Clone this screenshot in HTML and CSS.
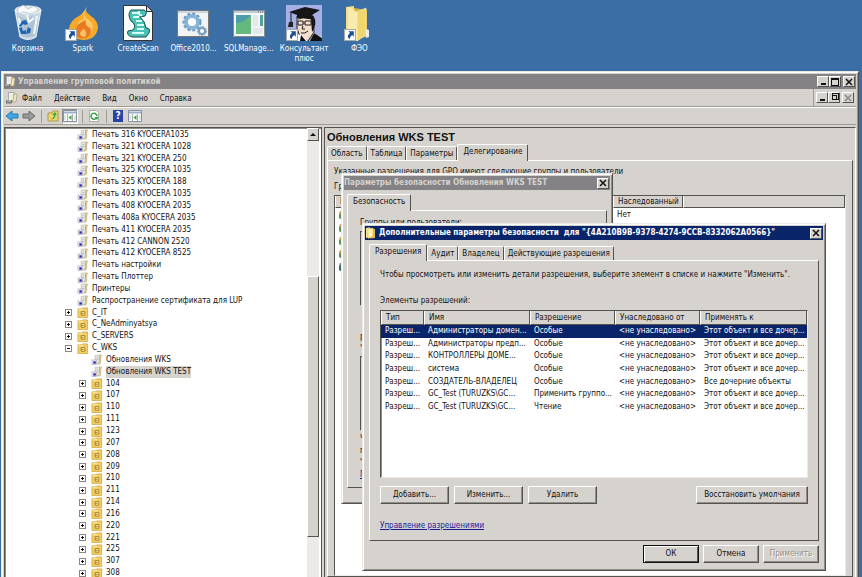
FILE: index.html
```
<!DOCTYPE html>
<html lang="ru">
<head>
    <meta charset="UTF-8">
    <meta name="viewport" content="width=device-width, initial-scale=1.0">
    <title>Управление групповой политикой</title>
    <link rel="stylesheet" href="styles.css">
</head>
<body>
    <!-- shared icons -->
    <svg class="sprite" aria-hidden="true">
        <symbol id="gpo" viewBox="0 0 12 12">
            <path d="M4 1.5L9.500 1L9 10.500L4 11z" fill="#e9e6dc" stroke="#aaa69a" stroke-width=".6"/>
            <path d="M9 1.500q1.500-1.500 2.200 0q0 1.200-1.200 1.200V10q-1.500 1.500-3 .8L8.500 9z" fill="#efe4ae" stroke="#9a8d55" stroke-width=".5"/>
            <path d="M5.500 4h2M5.500 6h2" stroke="#aab" stroke-width=".7"/>
            <rect x=".5" y="6.500" width="5" height="5" fill="#eef" stroke="#99a" stroke-width=".6"/>
            <path d="M2 10.500V8h2.700v2.500z" fill="#2424a8"/>
        </symbol>
        <symbol id="ou" viewBox="0 0 12 12">
            <path d="M.5 2h4l1-1h5.500v10.500H.5z" fill="#f3cf63" stroke="#c8962c" stroke-width=".7"/>
            <path d="M1 2.500h5v1H1z" fill="#fdf0b5"/>
            <path d="M4 5h4v4H4zM4 7h2.500" fill="#fbe69a" stroke="#9c741c" stroke-width=".9"/>
        </symbol>
        <symbol id="folder" viewBox="0 0 12 12">
            <path d="M1 1l4-.8v10L1 11z" fill="#f6e38c"/>
            <path d="M5 1l5 1v9l-5 .5z" fill="#e5bd45"/>
            <path d="M3 2l5-1v8.500L3 11.500z" fill="#fff3ae" stroke="#cfa838" stroke-width=".4"/>
        </symbol>
        <symbol id="shortcut" viewBox="0 0 11 11">
            <path d="M.5.5h10v10H.5z" fill="#fff" stroke="#aaa"/>
            <path d="M4 2h5v5L7.500 5.500Q5 7 5.500 9.500Q1.500 7.500 5.500 3.500z" fill="#1b4f96"/>
        </symbol>
        <symbol id="console" viewBox="0 0 12 12">
            <path d="M2.500.5h5.500v8H2.500z" fill="#f4f2e6" stroke="#aaa"/>
            <path d="M8 2q3-1 3 1l-1 7H6l1-2z" fill="#eee5bb" stroke="#988f69" stroke-width=".6"/>
            <path d="M0 8h6v3.500H0z" fill="#777"/><path d="M1 9h4M4 3h2M4 5h2" stroke="#ddd"/>
        </symbol>
        <symbol id="cross" viewBox="0 0 8 8">
            <path d="M1 1l6 6M7 1L1 7" fill="none" stroke="currentColor" stroke-width="1.500"/>
        </symbol>
        <symbol id="pane" viewBox="0 0 14 12">
            <path d="M.5.5h13v11H.5z" fill="#fff" stroke="#8791a4"/>
            <path d="M1 2.500h12" stroke="#9cafca" stroke-width="2"/><path d="M4.500 4v7M9.500 4v7" stroke="#a5b0a5"/>
            <path d="M2 5v5M12 5v5" stroke="#bcc"/><path d="M8.500 5v5L5.500 7.500z" fill="#36a542"/>
        </symbol>
    </svg>

    <main class="desktop">
        <nav class="shortcuts">
            <a href="#">
                <svg viewBox="0 0 36 38"><path d="M5 6l5 27q8 5 16 0l5-27z" fill="#c4d4e0" stroke="#eef4f8"/><ellipse cx="18" cy="6" rx="13" ry="4" fill="#dde6ed" stroke="#f7fafc"/><path d="M7 5l6-4 5 4 6-3 5 4-8 4-7-2-5 2z" fill="#f7f9fb" stroke="#9db1c1" stroke-width=".6"/><path d="M9 12l6 3 6-3 7 4-2 15q-8 4-15 0z" fill="#aec2d1"/><path d="M9 14l4 16M27 12l-3 18M17 11l2 7 5-4" stroke="#f4f8fb" stroke-width="2" fill="none"/><path d="M12 17l4-1 2 4-3 1-2-1-2 3-2-1zM9 24l3-1 1 4 3-1v4h-5zM18 23l3 2-1 4-4 1 1-4z" fill="#2264b4"/></svg>
                <span>Корзина</span>
            </a>
            <a href="#">
                <svg viewBox="0 0 36 38"><path d="M22 1q-4 6 4 11 7 5 7 12-2 12-15 12Q4 35 4 25q1-9 10-13 6-4 8-11z" fill="#f7a928"/><path d="M23 2q-7 9 0 13 7 5 4 13-4 6-10 5-8-3-6-9 2-8 8-9-3-6 4-13z" fill="#fcc768"/><path d="M21 16q-2 5 4 8 3 6-4 10-10 2-11-6 1-9 11-12z" fill="#ea7a20"/><path d="M19 25q4 4 1 8-5 0-5-4 1-3 4-4z" fill="#fbc06a"/><use href="#shortcut" x="0" y="25" width="12" height="12"/></svg>
                <span>Spark</span>
            </a>
            <a href="#">
                <svg viewBox="0 0 36 38"><path d="M3.500 1.500h23l6 6v29h-29z" fill="#fff" stroke="#333"/><path d="M26.500 1.500v6h6z" fill="#ddd" stroke="#333"/><path d="M11 6h13q4 2 1 6l-5 1q5 4 6 11 5 0 3 5l-3 4H12q-6-2-4-6l5-1q4-5-2-9-4-7 0-11z" fill="#48c2b4" stroke="#174c4b"/><path d="M12 9h8M13 13h6M16 17h6M17 21h7M17 25h7M12 29h12M19 7q-1 5 3 4" stroke="#d7fff8" stroke-width="2" fill="none"/></svg>
                <span>CreateScan</span>
            </a>
            <a href="#">
                <svg viewBox="0 0 36 38"><path d="M2.500 6.500h31v26h-31z" fill="#f2f3f4" stroke="#777"/><path d="M3 8h30" stroke="#cbd6df" stroke-width="2"/><circle cx="17" cy="18" r="6" fill="#fff" stroke="#88b4d7" stroke-width="4"/><circle cx="17" cy="18" r="8.500" fill="none" stroke="#6b9ac2" stroke-width="2" stroke-dasharray="3 2"/><circle cx="27" cy="27" r="3" fill="#fff" stroke="#779fc0" stroke-width="2"/><circle cx="27" cy="27" r="4.500" fill="none" stroke="#779fc0" stroke-dasharray="2 1"/></svg>
                <span>Office2010...</span>
            </a>
            <a href="#">
                <svg viewBox="0 0 36 38"><path d="M2.500 6.500h31v26h-31z" fill="#f5f6f6" stroke="#858c91"/><path d="M3 8h30" stroke="#c1cdd5" stroke-width="2"/><path d="M5 11h15v19H5z" fill="#4b9daa"/><path d="M5 30V19q9-1 15-8v19z" fill="#65b87e"/><path d="M22 11h5v11h-5zM22 24h10v6H22z" fill="#e3e8ea"/><path d="M29 11h3v11h-3z" fill="#50a5a1"/><path d="M27 8h5" stroke="#567" stroke-dasharray="1 1"/></svg>
                <span>SQLManage...</span>
            </a>
            <a href="#">
                <svg viewBox="0 0 36 38"><path d="M0 1h36v36H0z" fill="#a6b0e4"/><path d="M11 12h16l1 16-6 9-8-4-3-9z" fill="#f4dfcd" stroke="#222"/><path d="M25 10q7 5 3 15l-2 3-1-12z" fill="#181818"/><path d="M12 17h5v4h-5zM19 17h6v4h-6zM17 19h2M17 22l-1 3h3M15 29q4 1 7-2M12 15l4-1M20 14l5 1" fill="none" stroke="#222"/><path d="M10 30l5 1 7 6h7l-2-8 9 4v4H8z" fill="#fff"/><path d="M24 37l4-8 8 5v3zM15 31l5 6h-6z" fill="#111"/><path d="M3 8l16-5 15 3-8 5-1 4-14-1v-3z" fill="#161616"/><path d="M5 9v11" stroke="#161616"/><path d="M3 18h4v5H2z" fill="#222"/><use href="#shortcut" y="25" width="12" height="12"/></svg>
                <span>Консультант плюс</span>
            </a>
            <a href="#">
                <svg viewBox="0 0 36 38"><path d="M5 3l8-1v31l-8-2z" fill="#f4df85"/><path d="M13 4l13 2v27l-13 1z" fill="#d6b546"/><path d="M7 3l9 5v29l-9-5z" fill="#f9ebb0"/><path d="M16 8l9-4v27l-9 6z" fill="#efd66e" stroke="#fff0af" stroke-width=".7"/><path d="M25 25l3 1v7l-3 1z" fill="#e8ecef"/><use href="#shortcut" x="3" y="25" width="12" height="12"/></svg>
                <span>ФЭО</span>
            </a>
        </nav>

        <!-- group policy console -->
        <section class="window console">
            <header class="titlebar">
                <svg class="icon"><use href="#console"/></svg>
                <h1>Управление групповой политикой</h1>
                <div class="controls">
                    <button class="control" aria-label="Свернуть"><i class="min"></i></button>
                    <button class="control" aria-label="Развернуть"><i class="max"></i></button>
                    <button class="control" aria-label="Закрыть"><svg><use href="#cross"/></svg></button>
                </div>
            </header>
            <div class="menubar">
                <svg class="icon"><use href="#console"/></svg>
                <button>Файл</button>
                <button>Действие</button>
                <button>Вид</button>
                <button>Окно</button>
                <button>Справка</button>
                <div class="controls child">
                    <button class="control" aria-label="Свернуть окно"><i class="min"></i></button>
                    <button class="control" aria-label="Восстановить окно"><i class="restore"></i></button>
                    <button class="control" aria-label="Закрыть окно" disabled><svg><use href="#cross"/></svg></button>
                </div>
            </div>
            <div class="toolbar">
                <button aria-label="Назад"><svg viewBox="0 0 14 12"><path d="M1 6l6-5v3h6v4H7v3z" fill="#42a7e3" stroke="#237cb7"/></svg></button>
                <button aria-label="Вперёд"><svg viewBox="0 0 14 12"><path d="M13 6L7 1v3H1v4h6v3z" fill="#999" stroke="#6c6c6c"/></svg></button>
                <i class="sep"></i>
                <button aria-label="Вверх"><svg viewBox="0 0 14 12"><path d="M2 3h4l1-2h5v10H2z" fill="#efd56c" stroke="#b3984a"/><path d="M4 9q4 0 4-4H6l3-3 2 3H9.500q0 5-5.500 4z" fill="#39a83b"/></svg></button>
                <button class="pressed" aria-label="Дерево консоли"><svg><use href="#pane"/></svg></button>
                <i class="sep"></i>
                <button aria-label="Обновить"><svg viewBox="0 0 14 12"><path d="M2.500.5h7l2 2v9h-9z" fill="#fff" stroke="#aaa"/><path d="M9 8.500A3 3 0 1 1 10 6" fill="none" stroke="#33a244" stroke-width="1.500"/><path d="M7.500 7h4L10 10z" fill="#33a244"/></svg></button>
                <i class="sep"></i>
                <button aria-label="Справка"><span class="help">?</span></button>
                <button aria-label="Панель действий"><svg><use href="#pane"/></svg></button>
            </div>

            <div class="panes">
                <div class="tree-pane">
                    <ul class="tree">
                        <li><svg class="icon"><use href="#gpo"/></svg><span>Печать 316 KYOCERA1035</span></li>
                        <li><svg class="icon"><use href="#gpo"/></svg><span>Печать 321 KYOCERA 1028</span></li>
                        <li><svg class="icon"><use href="#gpo"/></svg><span>Печать 321 KYOCERA 250</span></li>
                        <li><svg class="icon"><use href="#gpo"/></svg><span>Печать 325 KYOCERA 1035</span></li>
                        <li><svg class="icon"><use href="#gpo"/></svg><span>Печать 325 KYOCERA 188</span></li>
                        <li><svg class="icon"><use href="#gpo"/></svg><span>Печать 403 KYOCERA 1035</span></li>
                        <li><svg class="icon"><use href="#gpo"/></svg><span>Печать 408 KYOCERA 2035</span></li>
                        <li><svg class="icon"><use href="#gpo"/></svg><span>Печать 408a KYOCERA 2035</span></li>
                        <li><svg class="icon"><use href="#gpo"/></svg><span>Печать 411 KYOCERA 2035</span></li>
                        <li><svg class="icon"><use href="#gpo"/></svg><span>Печать 412 CANNON 2520</span></li>
                        <li><svg class="icon"><use href="#gpo"/></svg><span>Печать 412 KYOCERA 8525</span></li>
                        <li><svg class="icon"><use href="#gpo"/></svg><span>Печать настройки</span></li>
                        <li><svg class="icon"><use href="#gpo"/></svg><span>Печать Плоттер</span></li>
                        <li><svg class="icon"><use href="#gpo"/></svg><span>Принтеры</span></li>
                        <li><svg class="icon"><use href="#gpo"/></svg><span>Распространение сертификата для LUP</span></li>
                        <li><button class="toggle" aria-label="Развернуть C_IT"></button><svg class="icon"><use href="#ou"/></svg><span>C_IT</span></li>
                        <li><button class="toggle" aria-label="Развернуть C_NeAdminyatsya"></button><svg class="icon"><use href="#ou"/></svg><span>C_NeAdminyatsya</span></li>
                        <li><button class="toggle" aria-label="Развернуть C_SERVERS"></button><svg class="icon"><use href="#ou"/></svg><span>C_SERVERS</span></li>
                        <li><button class="toggle open" aria-label="Свернуть C_WKS"></button><svg class="icon"><use href="#ou"/></svg><span>C_WKS</span></li>
                        <li class="sub"><svg class="icon"><use href="#gpo"/></svg><span>Обновления WKS</span></li>
                        <li class="sub"><svg class="icon"><use href="#gpo"/></svg><span class="current">Обновления WKS TEST</span></li>
                        <li class="sub"><button class="toggle" aria-label="Развернуть 104"></button><svg class="icon"><use href="#ou"/></svg><span>104</span></li>
                        <li class="sub"><button class="toggle" aria-label="Развернуть 107"></button><svg class="icon"><use href="#ou"/></svg><span>107</span></li>
                        <li class="sub"><button class="toggle" aria-label="Развернуть 110"></button><svg class="icon"><use href="#ou"/></svg><span>110</span></li>
                        <li class="sub"><button class="toggle" aria-label="Развернуть 111"></button><svg class="icon"><use href="#ou"/></svg><span>111</span></li>
                        <li class="sub"><button class="toggle" aria-label="Развернуть 123"></button><svg class="icon"><use href="#ou"/></svg><span>123</span></li>
                        <li class="sub"><button class="toggle" aria-label="Развернуть 207"></button><svg class="icon"><use href="#ou"/></svg><span>207</span></li>
                        <li class="sub"><button class="toggle" aria-label="Развернуть 208"></button><svg class="icon"><use href="#ou"/></svg><span>208</span></li>
                        <li class="sub"><button class="toggle" aria-label="Развернуть 209"></button><svg class="icon"><use href="#ou"/></svg><span>209</span></li>
                        <li class="sub"><button class="toggle" aria-label="Развернуть 210"></button><svg class="icon"><use href="#ou"/></svg><span>210</span></li>
                        <li class="sub"><button class="toggle" aria-label="Развернуть 211"></button><svg class="icon"><use href="#ou"/></svg><span>211</span></li>
                        <li class="sub"><button class="toggle" aria-label="Развернуть 214"></button><svg class="icon"><use href="#ou"/></svg><span>214</span></li>
                        <li class="sub"><button class="toggle" aria-label="Развернуть 216"></button><svg class="icon"><use href="#ou"/></svg><span>216</span></li>
                        <li class="sub"><button class="toggle" aria-label="Развернуть 220"></button><svg class="icon"><use href="#ou"/></svg><span>220</span></li>
                        <li class="sub"><button class="toggle" aria-label="Развернуть 221"></button><svg class="icon"><use href="#ou"/></svg><span>221</span></li>
                        <li class="sub"><button class="toggle" aria-label="Развернуть 225"></button><svg class="icon"><use href="#ou"/></svg><span>225</span></li>
                        <li class="sub"><button class="toggle" aria-label="Развернуть 307"></button><svg class="icon"><use href="#ou"/></svg><span>307</span></li>
                        <li class="sub"><button class="toggle" aria-label="Развернуть 308"></button><svg class="icon"><use href="#ou"/></svg><span>308</span></li>
                    </ul>
                    <div class="scrollbar">
                        <button class="control" aria-label="Прокрутить вверх"><i class="up"></i></button>
                        <div class="thumb"></div>
                    </div>
                </div>

                <div class="details-pane">
                    <h2>Обновления WKS TEST</h2>
                    <div class="tabs">
                        <button>Область</button>
                        <button>Таблица</button>
                        <button>Параметры</button>
                        <button class="active">Делегирование</button>
                    </div>
                    <div class="tab-panel delegation">
                        <p>Указанные разрешения для GPO имеют следующие группы и пользователи</p>
                        <p>Группы и пользователи:</p>
                        <div class="users">
                            <table>
                                <colgroup><col class="user-name"><col class="user-inherit"><col></colgroup>
                                <thead><tr><th>Имя</th><th>Наследованный</th><th></th></tr></thead>
                                <tbody>
                                    <tr><td><i class="person"></i></td><td>Нет</td><td></td></tr>
                                    <tr><td><i class="person"></i></td><td></td><td></td></tr>
                                    <tr><td><i class="person"></i></td><td></td><td></td></tr>
                                    <tr><td><i class="person"></i></td><td></td><td></td></tr>
                                    <tr><td><i class="person dark"></i></td><td></td><td></td></tr>
                                </tbody>
                            </table>
                        </div>
                    </div>
                </div>
            </div>
        </section>

        <!-- security settings -->
        <section class="window security">
            <header class="titlebar">
                <h2>Параметры безопасности Обновления WKS TEST</h2>
                <button class="control" aria-label="Закрыть"><svg><use href="#cross"/></svg></button>
            </header>
            <div class="tabs">
                <button class="active">Безопасность</button>
            </div>
            <div class="tab-panel">
                <p>Группы или пользователи:</p>
                <div class="box"></div>
                <p class="caption">Р<br>"</p>
                <div class="box"></div>
                <p>Ч<br>п<br>"</p>
                <a href="#">П</a>
            </div>
        </section>

        <!-- advanced security settings -->
        <section class="window advanced">
            <header class="titlebar">
                <svg class="icon"><use href="#folder"/></svg>
                <h2>Дополнительные параметры безопасности&nbsp; для "{4A210B9B-9378-4274-9CCB-8332062A0566}"</h2>
                <button class="control" aria-label="Закрыть"><svg><use href="#cross"/></svg></button>
            </header>
            <div class="tabs">
                <button class="active">Разрешения</button>
                <button>Аудит</button>
                <button>Владелец</button>
                <button>Действующие разрешения</button>
            </div>
            <div class="tab-panel">
                <p>Чтобы просмотреть или изменить детали разрешения, выберите элемент в списке и нажмите "Изменить".</p>
                <p class="caption">Элементы разрешений:</p>
                <div class="entries">
                    <table>
                        <colgroup><col class="type"><col class="name"><col class="right"><col class="right"><col></colgroup>
                        <thead>
                            <tr><th>Тип</th><th>Имя</th><th>Разрешение</th><th>Унаследовано от</th><th>Применять к</th></tr>
                        </thead>
                        <tbody>
                            <tr class="selected"><td>Разреш...</td><td>Администраторы домен...</td><td>Особые</td><td>&lt;не унаследовано&gt;</td><td>Этот объект и все дочер...</td></tr>
                            <tr><td>Разреш...</td><td>Администраторы предп...</td><td>Особые</td><td>&lt;не унаследовано&gt;</td><td>Этот объект и все дочер...</td></tr>
                            <tr><td>Разреш...</td><td>КОНТРОЛЛЕРЫ ДОМЕ...</td><td>Особые</td><td>&lt;не унаследовано&gt;</td><td>Этот объект и все дочер...</td></tr>
                            <tr><td>Разреш...</td><td>система</td><td>Особые</td><td>&lt;не унаследовано&gt;</td><td>Этот объект и все дочер...</td></tr>
                            <tr><td>Разреш...</td><td>СОЗДАТЕЛЬ-ВЛАДЕЛЕЦ</td><td>Особые</td><td>&lt;не унаследовано&gt;</td><td>Все дочерние объекты</td></tr>
                            <tr><td>Разреш...</td><td>GC_Test (TURUZKS\GC...</td><td>Применить группо...</td><td>&lt;не унаследовано&gt;</td><td>Этот объект и все дочер...</td></tr>
                            <tr><td>Разреш...</td><td>GC_Test (TURUZKS\GC...</td><td>Чтение</td><td>&lt;не унаследовано&gt;</td><td>Этот объект и все дочер...</td></tr>
                        </tbody>
                    </table>
                </div>
                <div class="actions">
                    <button class="push">Добавить...</button>
                    <button class="push">Изменить...</button>
                    <button class="push">Удалить</button>
                    <button class="push wide">Восстановить умолчания</button>
                </div>
                <a href="#">Управление разрешениями</a>
            </div>
            <footer>
                <button class="push default">ОК</button>
                <button class="push">Отмена</button>
                <button class="push" disabled>Применить</button>
            </footer>
        </section>
    </main>
</body>
</html>
```
FILE: styles.css
```
* {
    box-sizing: border-box;
}
body {
    margin: 0;
    font-family: "DejaVu Sans Condensed", "DejaVu Sans", sans-serif;
    font-size: 8px;
    line-height: 12px;
    color: #111;
}
h1, h2, p, ul {
    margin: 0;
    padding: 0;
}
button {
    font: inherit;
    color: inherit;
    padding: 0;
    border: 0;
    background: none;
    white-space: nowrap;
}
svg {
    display: block;
    flex: none;
}
.sprite {
    position: absolute;
    width: 0;
    height: 0;
}
.icon {
    width: 12px;
    height: 12px;
}

.desktop {
    position: relative;
    height: 100vh;
    overflow: hidden;
    background: #3a6ea5;
}
.shortcuts {
    display: flex;
    width: 387px;
    padding-top: 4px;
    line-height: 10px;
}
.shortcuts a {
    flex: 1 1 0;
    min-width: 0;
    display: flex;
    flex-direction: column;
    align-items: center;
    text-align: center;
    color: #fff;
    text-decoration: none;
}
.shortcuts svg {
    width: 36px;
    height: 38px;
    margin-bottom: 2px;
}

/* windows */
.window {
    position: absolute;
    display: flex;
    flex-direction: column;
    background: #d6d3ce;
    border: 1px solid;
    border-color: #eceae6 #55534f #55534f #eceae6;
    box-shadow: inset 1px 1px #fff, inset -1px -1px #918e89;
}
.titlebar {
    display: flex;
    align-items: center;
    gap: 2px;
    height: 14px;
    flex: none;
    padding: 0 1px 0 0;
    background: #848284;
    color: #d6d3ce;
}
.titlebar h1, .titlebar h2 {
    flex: 1;
    font-size: 8px;
    font-weight: bold;
    white-space: nowrap;
}
.controls {
    display: flex;
}
.control {
    flex: none;
    display: flex;
    align-items: center;
    justify-content: center;
    width: 12px;
    height: 11px;
    color: #111;
    background: #d6d3ce;
    border: 1px solid;
    border-color: #fff #55534f #55534f #fff;
}
.controls .control:last-child {
    margin-left: 2px;
}
.control svg {
    width: 8px;
    height: 8px;
}
.control:disabled {
    color: #8b8883;
}
.min {
    width: 5px;
    height: 7px;
    border-bottom: 2px solid;
}
.max {
    width: 8px;
    height: 8px;
    border: 1px solid;
    border-top-width: 2px;
}
.restore {
    width: 5px;
    height: 5px;
    border: 1px solid;
    box-shadow: 1px -1px #d6d3ce, 1px -1px 0 1px #111;
    background: #d6d3ce;
}
.up {
    border: 3px solid transparent;
    border-top: 0;
    border-bottom-color: #111;
}

/* tabs */
.tabs {
    display: flex;
    align-items: flex-end;
    height: 16px;
}
.tabs button {
    height: 14px;
    padding: 0 3px;
    border: 1px solid;
    border-color: #fff #55534f transparent #fff;
    border-bottom: 0;
    border-radius: 2px 2px 0 0;
}
.tabs .active {
    position: relative;
    height: 17px;
    margin-bottom: -1px;
    padding: 0 5px 2px;
    background: #d6d3ce;
}
.tab-panel {
    border: 1px solid;
    border-color: #fff #55534f #55534f #fff;
}
a {
    color: #1a1a9c;
}

/* console */
.console {
    top: 71px;
    right: 3px;
    bottom: -4px;
    left: 1px;
    padding: 2px;
}
.console > .titlebar {
    height: 15px;
}
.menubar {
    display: flex;
    align-items: center;
    gap: 12px;
    height: 18px;
    flex: none;
    padding-left: 2px;
    border-bottom: 1px solid #a09d98;
}
.menubar .icon {
    margin-right: -8px;
}
.menubar > button {
    padding-top: 2px;
}
.child {
    margin-left: auto;
    height: 100%;
    align-items: center;
    padding: 0 2px;
    border-left: 1px solid #a09d98;
}
.toolbar {
    display: flex;
    align-items: center;
    gap: 1px;
    height: 18px;
    flex: none;
    border-top: 1px solid #fff;
    border-bottom: 1px solid #a09d98;
    margin-bottom: 2px;
}
.toolbar button {
    width: 16px;
    height: 15px;
    display: flex;
    align-items: center;
    justify-content: center;
}
.toolbar svg {
    width: 14px;
    height: 12px;
}
.toolbar .pressed {
    background: #e9e7e3;
    border: 1px solid;
    border-color: #918e89 #fff #fff #918e89;
}
.sep {
    height: 13px;
    margin: 0 2px 0 3px;
    border-left: 1px solid #a09d98;
}
.help {
    width: 10px;
    height: 12px;
    background: #2743a8;
    color: #fff;
    font-size: 10px;
    font-weight: bold;
}
.panes {
    display: flex;
    flex: 1;
    min-height: 0;
    gap: 2px;
}
.tree-pane {
    display: flex;
    flex: 0 0 318px;
    padding-right: 2px;
    overflow: hidden;
    background: #fff;
    border: 1px solid #55534f;
    box-shadow: inset 1px 1px #918e89;
}
.tree {
    display: flex;
    flex-direction: column;
    flex: 1;
    height: 451px;
    padding-top: 1px;
    list-style: none;
}
.tree li {
    flex: 1 1 0;
    min-height: 0;
    display: flex;
    align-items: center;
    gap: 3px;
    padding-left: 72px;
    white-space: nowrap;
}
.tree .sub {
    padding-left: 86px;
}
.tree .icon {
    height: 11px;
}
.tree .current {
    background: #d6d3ce;
}
.toggle {
    width: 7px;
    height: 7px;
    margin: 0 2px 0 -12px;
    border: 1px solid #8b8883;
    background: linear-gradient(#111, #111) center / 3px 1px no-repeat, linear-gradient(#111, #111) center / 1px 3px no-repeat;
}
.toggle.open {
    background: linear-gradient(#111, #111) center / 3px 1px no-repeat;
}
.scrollbar {
    width: 12px;
    background: #eceae6;
}
.scrollbar .control {
    height: 13px;
}
.thumb {
    height: 261px;
    margin-top: 135px;
    background: #d6d3ce;
    border: 1px solid;
    border-color: #fff #55534f #55534f #fff;
}
.details-pane {
    flex: 1;
    min-width: 0;
    display: flex;
    flex-direction: column;
    padding: 2px 2px 0;
    border: 1px solid;
    border-color: #55534f #fff #fff #55534f;
}
.details-pane h2 {
    font-family: "Liberation Sans", sans-serif;
    font-size: 11px;
    line-height: 14px;
}
.delegation {
    flex: 1;
    display: flex;
    flex-direction: column;
    padding: 5px 6px 0;
}
.delegation p {
    margin-bottom: 3px;
}
.delegation p + p {
    margin-bottom: 2px;
}
.users {
    flex: 1;
    background: #fff;
    border: 1px solid;
    border-color: #55534f #eceae6 #eceae6 #55534f;
}
table {
    width: 100%;
    table-layout: fixed;
    border-collapse: separate;
    border-spacing: 0;
}
th, td {
    padding: 0 0 0 4px;
    text-align: left;
    font-weight: normal;
    white-space: nowrap;
    overflow: hidden;
}
th {
    height: 12px;
    line-height: 11px;
    background: #d6d3ce;
    border: 1px solid;
    border-color: #fff #55534f #55534f #fff;
    border-top: 0;
}
.user-name {
    width: 278px;
}
.user-inherit {
    width: 70px;
}
.users td {
    height: 13px;
}
.person {
    display: block;
    width: 9px;
    height: 9px;
    border-radius: 5px 5px 2px 2px;
    background: linear-gradient(#c69a52 40%, #5d9a54 40%);
}
.person.dark {
    background: linear-gradient(#777 40%, #3f6b66 40%);
}

/* security dialog */
.security {
    top: 173px;
    left: 341px;
    width: 272px;
    height: 331px;
    padding: 2px 2px 28px;
}
.security .tabs {
    margin: 4px 3px 0;
}
.security .tab-panel {
    flex: 1;
    margin: 0 3px;
    padding: 6px 12px;
}
.box {
    height: 75px;
    margin: 2px 0 28px;
    border: 1px solid;
    border-color: #55534f #fff #fff #55534f;
}
.security .caption {
    line-height: 10px;
}
.security .caption + .box {
    margin-bottom: 2px;
}

/* advanced dialog */
.advanced {
    top: 223px;
    left: 362px;
    width: 464px;
    height: 348px;
    padding: 2px;
}
.advanced .titlebar {
    background: #0a246a;
    color: #fff;
}
.advanced .tabs {
    margin: 4px 4px 0;
}
.advanced .tab-panel {
    flex: 1;
    margin: 0 4px;
    padding: 8px 10px;
}
.advanced .caption {
    margin: 14px 0 3px;
}
.entries {
    height: 168px;
    background: #fff;
    border: 1px solid;
    border-color: #55534f #eceae6 #eceae6 #55534f;
    box-shadow: inset 1px 0 #918e89;
}
.entries table {
    height: 102px;
}
.entries th {
    height: 14px;
    line-height: 12px;
}
.type {
    width: 43px;
}
.name {
    width: 106px;
}
.right {
    width: 85px;
}
.selected td {
    background: #0a246a;
    color: #fff;
}
.actions {
    display: flex;
    gap: 5px;
    margin: 8px 0 16px;
}
.push {
    width: 69px;
    height: 18px;
    background: #d6d3ce;
    border: 1px solid;
    border-color: #fff #55534f #55534f #fff;
    box-shadow: inset -1px -1px #918e89;
}
.push:disabled {
    color: #918e89;
    text-shadow: 1px 1px #fff;
}
.push.default {
    border-color: #111;
    box-shadow: inset 1px 1px #fff, inset -1px -1px #55534f;
}
.wide {
    width: 112px;
    margin-left: auto;
}
footer {
    display: flex;
    justify-content: flex-end;
    gap: 4px;
    padding: 4px 4px 5px;
}
footer .push {
    width: 56px;
}
```
